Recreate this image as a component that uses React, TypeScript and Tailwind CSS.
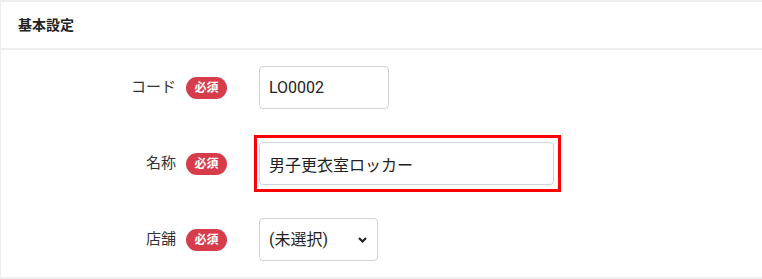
export default function App() {
  const font = { fontFamily: 'Roboto, "Noto Sans CJK JP", sans-serif' };

  const Badge = () => (
    <span className="flex h-[22px] w-[41px] items-center justify-center rounded-full bg-[#d73c4b] text-[12px] font-bold leading-none text-white">
      必須
    </span>
  );

  return (
    <div className="h-[279px] w-[762px] bg-[#eeeeee] pl-[1px] pt-[2px]" style={font}>
      {/* ヘッダー */}
      <div className="flex h-[46px] items-center bg-white pl-[17px] text-[14px] font-semibold text-[#222]">
        基本設定
      </div>

      {/* 本体 */}
      <div className="mt-[2px] flex h-[227px] flex-col gap-[33px] bg-white pt-[16px] text-[#333]">
        {/* コード */}
        <div className="flex h-[43px] items-center">
          <div className="flex w-[226px] items-center justify-end gap-[10px]">
            <span className="text-[15px]">コード</span>
            <Badge />
          </div>
          <input
            readOnly
            value="LO0002"
            className="ml-[32px] h-[43px] w-[130px] rounded-[4px] border border-[#ced4da] px-[9px] text-[16px] text-[#222] outline-none"
          />
        </div>

        {/* 名称 */}
        <div className="flex h-[43px] items-center">
          <div className="flex w-[226px] items-center justify-end gap-[10px]">
            <span className="text-[15px]">名称</span>
            <Badge />
          </div>
          <div className="relative ml-[32px]">
            <input
              readOnly
              value="男子更衣室ロッカー"
              className="h-[43px] w-[295px] rounded-[4px] border border-[#ced4da] px-[9px] text-[16px] text-[#222] outline-none"
            />
            <div className="pointer-events-none absolute -bottom-[7px] -left-[5px] -right-[7px] -top-[7px] border-[3px] border-[#ff0000]" />
          </div>
        </div>

        {/* 店舗 */}
        <div className="flex h-[43px] items-center">
          <div className="flex w-[226px] items-center justify-end gap-[10px]">
            <span className="text-[15px]">店舗</span>
            <Badge />
          </div>
          <div className="ml-[32px] flex h-[43px] w-[119px] items-center justify-between rounded-[4px] border border-[#ced4da] pl-[9px] pr-[10px] text-[16px] text-[#222]">
            <span>(未選択)</span>
            <svg width="9" height="6" viewBox="0 0 9 6" fill="none">
              <path d="M1 1l3.5 3.5L8 1" stroke="#222" strokeWidth="2.2" />
            </svg>
          </div>
        </div>
      </div>
    </div>
  );
}
